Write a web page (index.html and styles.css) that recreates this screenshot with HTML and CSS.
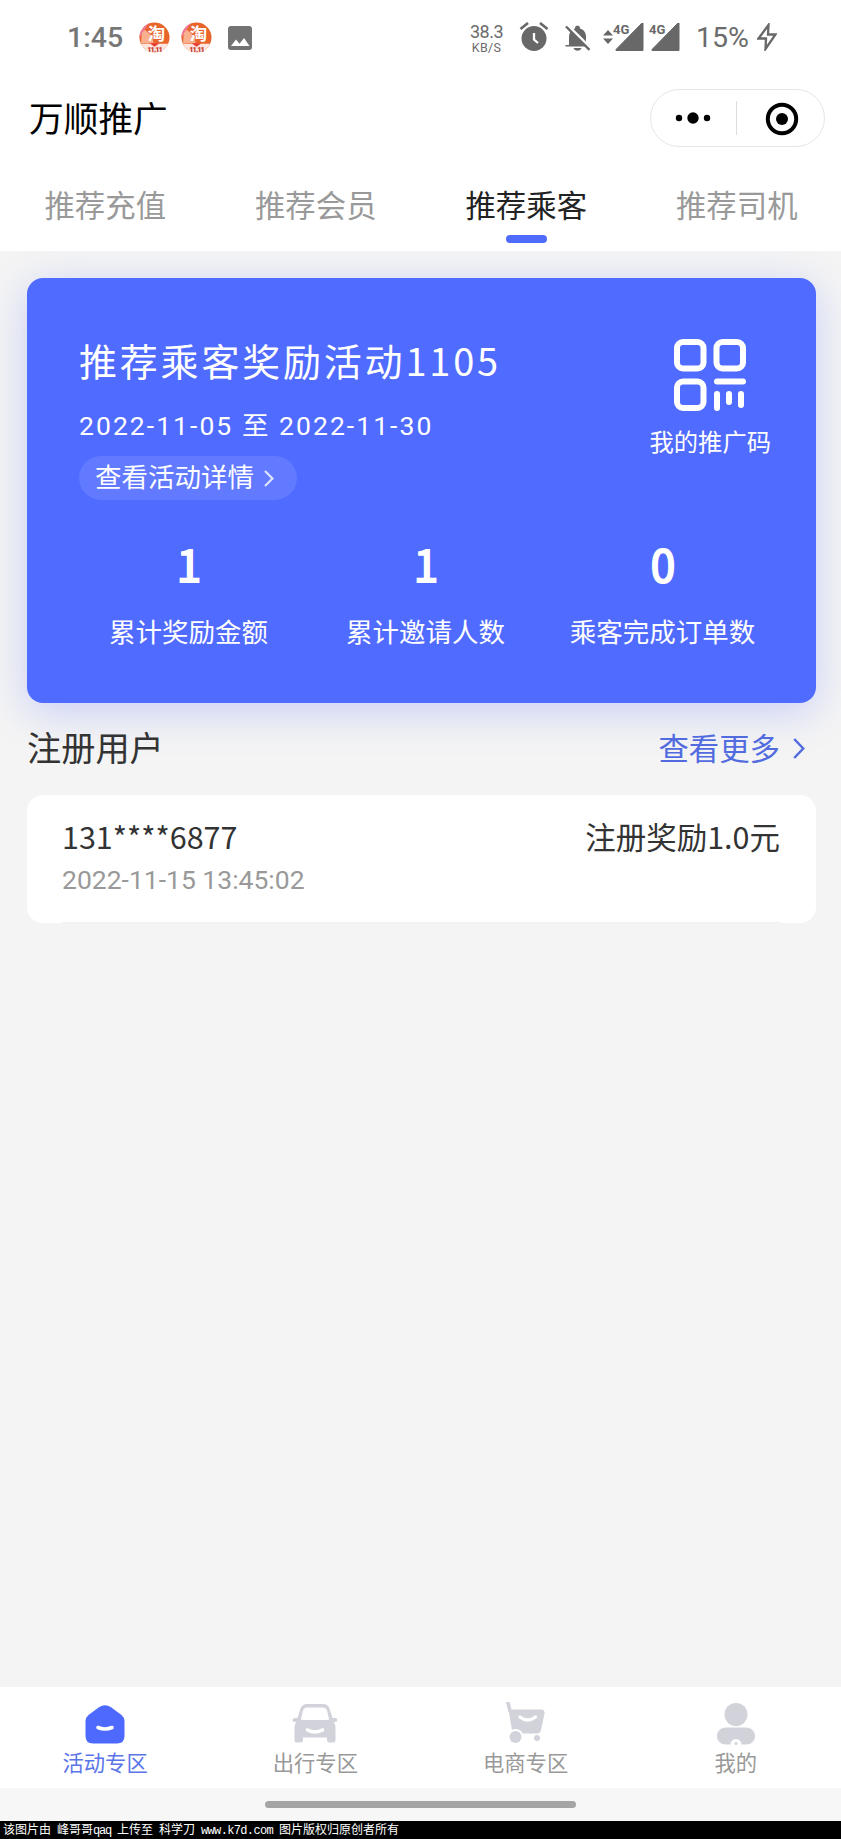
FILE: index.html
```html
<!DOCTYPE html>
<html lang="zh-CN">
<head>
<meta charset="utf-8">
<title>万顺推广</title>
<link rel="stylesheet" href="styles.css">
</head>
<body>
<div class="page">
  <header class="header">
    <div class="status">
      <span class="clock">1:45</span>
      <svg class="promo" viewBox="0 0 32 32"><clipPath id="c"><circle cx="16" cy="16" r="15.5"/></clipPath><g clip-path="url(#c)"><rect width="32" height="32" fill="#e8642a"/><path d="M0 0h11L5 9l-5 8z" fill="#f0799a"/><path d="M3 11l3-3 8 7 1 7H2z" fill="#f9b08f"/><path d="M0 22.500h32V32H0z" fill="#fde5df"/><path d="M11 22h10l-5 3.500z" fill="#e8392c"/></g><text class="promo-char" x="18" y="19">淘</text><text class="promo-date" x="16.500" y="30.500" textLength="16">11.11</text></svg>
      <svg class="promo" viewBox="0 0 32 32"><g clip-path="url(#c)"><rect width="32" height="32" fill="#e8642a"/><path d="M0 0h11L5 9l-5 8z" fill="#f0799a"/><path d="M3 11l3-3 8 7 1 7H2z" fill="#f9b08f"/><path d="M0 22.500h32V32H0z" fill="#fde5df"/><path d="M11 22h10l-5 3.500z" fill="#e8392c"/></g><text class="promo-char" x="18" y="19">淘</text><text class="promo-date" x="16.500" y="30.500" textLength="16">11.11</text></svg>
      <svg class="photo" viewBox="0 0 24 24"><rect width="24" height="24" rx="3" fill="#737373"/><path d="M3 20l5-6.500 3.500 4.200L16 12l5.500 8z" fill="#fff"/></svg>
      <span class="speed"><b>38.3</b><i>KB/S</i></span>
      <svg class="alarm" viewBox="0 0 30 30" fill="none" stroke="#686868"><circle cx="15" cy="16.500" r="12.500" fill="#686868" stroke="none"/><path d="M1.500 7l7.500-6M21 1l7.500 6" stroke-width="2.700"/><path d="M15 11v6.500l4 3.500" stroke="#fff" stroke-width="2.300"/></svg>
      <svg class="bell" viewBox="0 0 26 27"><path d="M4 20V12c0-4 2-7.200 6-8.500C10 1 11 .8 12.500 .8S15 1 15 3.500c4 1 6 4.500 6 8.500v5l3.500 3v1.500H.5V20zM8.500 23h8c-1 3.500-7 3.500-8 0z" fill="#686868"/><path d="M2.700 .500L26 23.500" stroke="#fff" stroke-width="3"/><path d="M1 1.500L24.500 24.800" stroke="#686868" stroke-width="2.400"/></svg>
      <svg class="updown" viewBox="0 0 10 14" fill="#686868"><path d="M0 5.500L5 0l5 5.500zM0 8.500L5 14l5-5.500z"/></svg>
      <svg class="signal" viewBox="0 0 31 28"><path d="M29 0h1v27.500H3v-1z" fill="#686868" stroke="#686868" stroke-linejoin="round"/><path d="M0 0h17.500v11H0z" fill="#fff"/><text x="0" y="10.500">4G</text></svg>
      <svg class="signal second" viewBox="0 0 31 28"><path d="M29 0h1v27.500H3v-1z" fill="#686868" stroke="#686868" stroke-linejoin="round"/><path d="M0 0h17.500v11H0z" fill="#fff"/><text x="0" y="10.500">4G</text></svg>
      <span class="battery">15%</span>
      <svg class="bolt" viewBox="0 0 20 28" fill="none" stroke="#686868" stroke-width="2.300"><path d="M11.500 2L1.500 15.500h7.500L8.500 26 18.500 11.500H11z"/></svg>
    </div>
    <div class="titlebar">
      <h1 class="title">万顺推广</h1>
      <div class="capsule">
        <svg class="dots" viewBox="0 0 36 12"><circle cx="4" cy="6" r="3.200"/><circle cx="18" cy="6" r="5.700"/><circle cx="32" cy="6" r="3.200"/></svg>
        <span class="divider"></span>
        <svg class="target" viewBox="0 0 34 34"><circle cx="17" cy="17" r="14.200" fill="none" stroke="#000" stroke-width="4"/><circle cx="17" cy="17" r="6"/></svg>
      </div>
    </div>
    <nav class="tabs">
      <a class="tab">推荐充值</a>
      <a class="tab">推荐会员</a>
      <a class="tab active">推荐乘客</a>
      <a class="tab">推荐司机</a>
    </nav>
  </header>

  <main class="content">
    <section class="card">
      <div class="card-top">
        <div class="campaign">
          <h2 class="campaign-title">推荐乘客奖励活动1105</h2>
          <p class="campaign-date">2022-11-05 至 2022-11-30</p>
          <a class="details">查看活动详情<svg class="details-arrow" viewBox="0 0 10 17"><path d="M1 1l7.500 7.500L1 16"/></svg></a>
        </div>
        <div class="qr">
          <svg class="qr-icon" viewBox="0 0 72 72" fill="none" stroke="#fff" stroke-width="6" stroke-linecap="round"><rect x="3" y="3" width="26.500" height="26.500" rx="6"/><rect x="42.500" y="3" width="26.500" height="26.500" rx="6"/><rect x="3" y="42.500" width="26.500" height="26.500" rx="6"/><path d="M43 42.500h26M43 55v14M55 55v8M67 55v11"/></svg>
          <span class="qr-label">我的推广码</span>
        </div>
      </div>
      <div class="stats">
        <div class="stat"><b class="stat-value">1</b><span class="stat-label">累计奖励金额</span></div>
        <div class="stat"><b class="stat-value">1</b><span class="stat-label">累计邀请人数</span></div>
        <div class="stat"><b class="stat-value">0</b><span class="stat-label">乘客完成订单数</span></div>
      </div>
    </section>

    <div class="section-head">
      <h3 class="section-title">注册用户</h3>
      <a class="more">查看更多<svg class="more-arrow" viewBox="0 0 12 21"><path d="M1.200 1l9 9.500-9 9.500"/></svg></a>
    </div>

    <section class="list">
      <div class="row">
        <div class="row-main"><span>131****6877</span><span>注册奖励1.0元</span></div>
        <div class="row-time">2022-11-15 13:45:02</div>
      </div>
    </section>
  </main>

  <nav class="tabbar">
    <a class="item current"><svg class="item-icon" viewBox="0 0 46 46"><path d="M17 5.300Q23 1 29 5.300L39.500 13Q42.500 15.500 42.500 19V34Q42.500 41.500 35 41.500H11Q3.500 41.500 3.500 34V19Q3.500 15.500 6.500 13z" fill="#4e6afe"/><path d="M16 25.500q7 3 14 0" fill="none" stroke="#fff" stroke-width="3.600" stroke-linecap="round"/></svg><span>活动专区</span></a>
    <a class="item"><svg class="item-icon" viewBox="0 0 46 46"><path d="M15 2h16q5 0 6.500 4.500L40.500 16h2.500q2.500 0 2.500 2t-2.500 2h-1.500q2 2 2 5v13q0 2.500-2.500 2.500h-4q-2 0-2-2.500v-2.500H11V38q0 2.500-2.500 2.500h-4Q2.500 40.500 2.500 38V25q0-3 2-5H3Q.5 20 .5 18t2.500-2h2.500l3-9.500Q10 2 15 2z" fill="#d2d3da"/><path d="M15 5.500h16q3 0 4 3L37 17q0 1-1 1H10q-1 0-1-1l2-8.500q1-3 4-3z" fill="#fff"/><path d="M15.500 28q7.500 4 15 0" fill="#fff" stroke="#fff" stroke-width="3.600" stroke-linecap="round"/></svg><span>出行专区</span></a>
    <a class="item"><svg class="item-icon" viewBox="0 0 46 46"><path d="M5 .8l2 8" fill="none" stroke="#d2d3da" stroke-width="3.600" stroke-linecap="round"/><path d="M5.500 7.500H38Q42 7.500 41.500 11.500L38 28q-.8 3.500-4 3.500H9.500z" fill="#d2d3da"/><circle cx="12.500" cy="35" r="8" fill="#fff"/><circle cx="12.500" cy="35" r="6" fill="#d2d3da"/><circle cx="34" cy="36" r="3" fill="#d2d3da"/><path d="M17 15q7.500 6 15.500 0" fill="none" stroke="#fff" stroke-width="3.300" stroke-linecap="round"/></svg><span>电商专区</span></a>
    <a class="item"><svg class="item-icon" viewBox="0 0 46 46" fill="#d2d3da"><circle cx="23" cy="12.500" r="11.500"/><path d="M13 25.500h20c5 0 9 3.500 9 8.500s-4 8.500-9 8.500h-4.500a5.500 5.500 0 0 0-11 0H13c-5 0-9-3.500-9-8.500s4-8.500 9-8.500z"/><circle cx="23" cy="41.500" r="1.500"/></svg><span>我的</span></a>
  </nav>
  <div class="gesture"><span class="gesture-bar"></span></div>
  <footer class="credit">该图片由 峰哥哥<span class="latin">qaq</span> 上传至 科学刀 <span class="latin url">www.k7d.com</span> 图片版权归原创者所有</footer>
</div>
</body>
</html>
```
FILE: styles.css
```css
* { box-sizing: border-box; margin: 0; padding: 0; }
body { background: #f4f4f4; color: #333; font-family: "Noto Sans CJK SC", sans-serif; font-weight: 400; }
h1, h2, h3 { font-weight: 400; }
svg { display: block; flex: none; }
.page { display: flex; flex-direction: column; width: 841px; height: 1839px; overflow: hidden; }

/* header */
.header { position: relative; z-index: 1; height: 251px; background: #fff; }
.status { display: flex; align-items: flex-start; height: 82px; padding: 22px 0 0 67px; color: #6b6b6b; font-family: Roboto, sans-serif; white-space: nowrap; }
.clock { width: 72px; font-size: 28.500px; font-weight: 500; line-height: 32px; color: #777; }
.promo { width: 31px; height: 31px; margin-right: 11px; overflow: visible; }
.promo-char { fill: #fff; font: 700 18px "Noto Sans CJK SC", sans-serif; text-anchor: middle; }
.promo-date { fill: #c5342c; font: 900 7.500px Roboto, sans-serif; text-anchor: middle; }
.photo { width: 24px; height: 24px; margin: 4px 0 0 5px; }
.speed { display: flex; flex-direction: column; align-items: center; width: 33px; margin: 0 0 0 218px; }
.speed b { font-size: 18px; line-height: 19px; font-weight: 400; letter-spacing: -.5px; }
.speed i { font-size: 12.500px; line-height: 13px; font-style: normal; letter-spacing: .3px; }
.alarm { width: 30px; height: 30px; margin-left: 16px; }
.bell { width: 26px; height: 27px; margin: 3px 0 0 16px; }
.updown { width: 10px; height: 14px; margin: 8px 0 0 12px; }
.signal { width: 31px; height: 28px; margin: 1px 0 0 0; }
.signal.second { margin-left: 5px; }
.signal text { font: 700 13px Roboto, sans-serif; fill: #686868; }
.battery { width: 60px; margin: 0 0 0 16px; font-size: 28.500px; line-height: 32px; }
.bolt { width: 20px; height: 28px; margin: 1px 0 0 1px; }

.titlebar { display: flex; justify-content: space-between; align-items: center; height: 72px; padding: 0 16px 0 29px; }
.title { font-size: 34.700px; line-height: 50px; color: #000; margin-top: -2px; }
.capsule { display: flex; align-items: center; width: 175px; height: 58px; border: 1.500px solid #e6e6e6; border-radius: 29px; padding-left: 24px; }
.dots { width: 36px; height: 12px; }
.divider { width: 1px; height: 34px; margin: 0 28px 0 25px; background: #dedede; }
.target { width: 34px; height: 34px; margin-top: 1px; }

.tabs { display: grid; grid-template-columns: repeat(4, 210.500px); }
.tab { display: flex; flex-direction: column; align-items: center; padding-top: 25px; font-size: 30.400px; line-height: 50px; color: #999; }
.tab.active { color: #222; }
.tab.active::after { content: ""; width: 41px; height: 8px; margin-top: 6px; border-radius: 4px; background: #4f6bfb; }

/* campaign card */
.content { flex: 1; padding: 27px 25px 0 27px; }
.card { height: 425px; padding: 60px 34px 0 43px; border-radius: 16px; background: #506bff; color: #fff; box-shadow: 0 9px 40px rgba(80, 107, 255, .27); }
.card-top { display: flex; justify-content: space-between; height: 194px; }
.campaign { display: flex; flex-direction: column; align-items: flex-start; padding-left: 9px; }
.campaign-title { font-size: 38px; line-height: 44px; letter-spacing: 2.800px; }
.campaign-date { margin-top: 28px; font: 26.500px/32px Roboto, "Noto Sans CJK SC", sans-serif; letter-spacing: 2.050px; }
.details { display: flex; align-items: center; height: 44px; margin-top: 14px; padding: 0 23px 4px 16px; border-radius: 22px; background: #627aff; font-size: 26.500px; line-height: 38px; }
.details-arrow { width: 10px; height: 17px; margin: 4px 0 0 10px; fill: none; stroke: #dfe4ff; stroke-width: 2.200; }
.qr { display: flex; flex-direction: column; align-items: center; padding: 1px 11px 0 0; }
.qr-icon { width: 72px; height: 72px; }
.qr-label { margin-top: 13px; font-size: 24.300px; line-height: 34px; }
.stats { display: grid; grid-template-columns: repeat(3, 237px); }
.stat { display: flex; flex-direction: column; align-items: center; }
.stat-value { padding-left: 1px; font-size: 44px; line-height: 62px; font-weight: 400; -webkit-text-stroke: 2px #fff; }
.stat-label { margin-top: 17px; font-size: 26.500px; line-height: 40px; }

/* registered users */
.section-head { display: flex; justify-content: space-between; align-items: center; height: 92px; padding-right: 11px; }
.section-title { font-size: 34.200px; line-height: 50px; margin-top: -7px; }
.more { display: flex; align-items: center; margin-top: -5px; font-size: 30.400px; line-height: 50px; color: #526ce0; }
.more-arrow { width: 12px; height: 21px; margin: 4px 0 0 13px; fill: none; stroke: #526ce0; stroke-width: 2.500; }
.list { height: 128px; padding: 18px 36px 0 35px; border-radius: 16px; background: #fff; }
.row { height: 110px; border-bottom: 1px solid #f1f1f1; }
.row-main { display: flex; justify-content: space-between; font-size: 30.500px; line-height: 46px; }
.row-time { margin-top: 5px; font: 26.500px/32px Roboto, sans-serif; color: #999; }

/* bottom navigation */
.tabbar { display: grid; grid-template-columns: repeat(4, 1fr); height: 101px; background: #fff; }
.item { display: flex; flex-direction: column; align-items: center; padding-top: 15px; font-size: 21.300px; line-height: 30px; color: #999; }
.item.current { color: #5b74e8; }
.item-icon { width: 46px; height: 46px; margin-bottom: -1px; }
.gesture { display: flex; justify-content: center; height: 33px; padding-top: 13px; background: #f7f7f7; }
.gesture-bar { width: 311px; height: 7px; border-radius: 4px; background: #a5a5a5; }
.credit { height: 18px; padding-left: 3px; background: #000; color: #fff; font-size: 12px; line-height: 16px; word-spacing: 3.300px; white-space: nowrap; }
.latin { font-family: "Liberation Mono", monospace; letter-spacing: -1.200px; }
.url { letter-spacing: -.650px; }
```
